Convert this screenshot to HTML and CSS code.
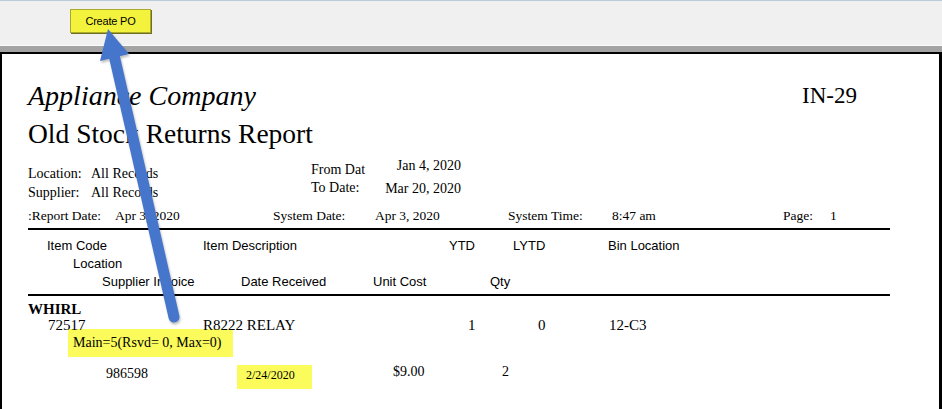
FILE: index.html
```html
<!DOCTYPE html>
<html>
<head>
<meta charset="utf-8">
<link rel="stylesheet" href="styles.css">
</head>
<body>
<div class="toolbar"><button class="btn">Create PO</button></div>
<div class="band"></div>
<div class="page">
  <div class="title-row">
    <div class="company">Appliance Company</div>
    <div class="code">IN-29</div>
  </div>
  <div class="report-title">Old Stock Returns Report</div>
  <div class="info">
    <div class="info-left">
      <div class="kv"><span class="k">Location:</span><span>All Records</span></div>
      <div class="kv"><span class="k">Supplier:</span><span>All Records</span></div>
    </div>
    <div class="info-labels"><div>From Dat</div><div>To Date:</div></div>
    <div class="info-values"><div>Jan 4, 2020</div><div>Mar 20, 2020</div></div>
  </div>
  <div class="meta">
    <span>:Report Date:</span><span>Apr 3, 2020</span>
    <span>System Date:</span><span>Apr 3, 2020</span>
    <span>System Time:</span><span>8:47 am</span>
    <span>Page:</span><span>1</span>
  </div>
  <div class="rule rule-a"></div>
  <div class="hdr hdr1">
    <span>Item Code</span><span>Item Description</span><span>YTD</span><span>LYTD</span><span>Bin Location</span>
  </div>
  <div class="hdr hdr2"><span>Location</span></div>
  <div class="hdr hdr3">
    <span>Supplier Invoice</span><span>Date Received</span><span>Unit Cost</span><span>Qty</span>
  </div>
  <div class="rule rule-b"></div>
  <div class="group">WHIRL</div>
  <div class="item-row">
    <span>72517</span><span>R8222 RELAY</span><span>1</span><span>0</span><span>12-C3</span>
  </div>
  <div class="note">Main=5(Rsvd= 0, Max=0)</div>
  <div class="detail-row">
    <span>986598</span><span><span class="mark">2/24/2020</span></span><span class="cost">$9.00</span><span class="qty">2</span>
  </div>
</div>
<svg class="arrow" viewBox="0 0 942 409" width="942" height="409">
  <line x1="114" y1="55" x2="174" y2="317" stroke="#4676cc" stroke-width="11" stroke-linecap="round"/>
  <polygon points="108,29 129,54 100,61" fill="#4676cc"/>
</svg>
</body>
</html>
```
FILE: styles.css
```css
html, body {
  margin: 0;
  padding: 0;
}
body {
  width: 942px;
  height: 409px;
  overflow: hidden;
  position: relative;
  background: #f0f0f0;
  font-family: "Liberation Serif", "Times New Roman", serif;
  color: #000;
}
.toolbar {
  box-sizing: border-box;
  height: 46px;
  border-top: 1px solid #bccbdb;
  border-bottom: 1px solid #fbfbfb;
  background: #f0f0f0;
  padding: 8px 0 0 70px;
}
.btn {
  display: block;
  box-sizing: border-box;
  width: 81px;
  height: 24px;
  padding: 0;
  margin: 0;
  background: #f3f33e;
  border: 1px solid #a9a92c;
  box-shadow: 1px 1px 0 #6f6f1c;
  font-family: "Liberation Sans", Arial, sans-serif;
  font-size: 11px;
  letter-spacing: -0.2px;
  color: #000;
}
.band {
  height: 6px;
  background: #a3a3a3;
}
.page {
  box-sizing: border-box;
  height: 357px;
  background: #fff;
  border-style: solid;
  border-color: #000;
  border-width: 2px 3px 0 2px;
  padding: 28px 0 0 26px;
}
.title-row {
  display: flex;
  height: 34px;
}
.company {
  font-style: italic;
  font-size: 28px;
  line-height: 28px;
  width: 774px;
}
.code {
  font-size: 23px;
  line-height: 30px;
  margin-top: -1px;
}
.report-title {
  font-size: 27.5px;
  line-height: 36px;
}
.info {
  display: grid;
  grid-template-columns: 283px 72px 78px;
  margin-top: 4px;
  font-size: 14px;
}
.info-left {
  padding-top: 8px;
  line-height: 19px;
}
.kv {
  display: flex;
}
.k {
  width: 63px;
}
.info-labels {
  padding-top: 5px;
  line-height: 18px;
}
.info-values {
  line-height: 19px;
  display: flex;
  flex-direction: column;
  gap: 4px;
  text-align: right;
}
.meta {
  display: grid;
  grid-template-columns: 87px 158px 102px 133px 104px 171px 47px auto;
  margin-top: 6px;
  font-size: 13.5px;
  line-height: 16px;
  width: 862px;
}
.rule {
  width: 862px;
  height: 2px;
  background: #000;
}
.rule-a {
  margin-top: 4px;
}
.hdr {
  font-family: "Liberation Sans", Arial, sans-serif;
  font-size: 13px;
  line-height: 18px;
  display: grid;
}
.hdr1 {
  margin-top: 7px;
  padding-left: 19px;
  grid-template-columns: 156px 246px 64px 95px auto;
}
.hdr2 {
  padding-left: 45px;
}
.hdr3 {
  padding-left: 74px;
  grid-template-columns: 139px 132px 117px auto;
}
.rule-b {
  margin-top: 3px;
}
.group {
  margin-top: 5px;
  font-weight: bold;
  font-size: 15px;
  line-height: 16px;
}
.item-row {
  display: grid;
  padding-left: 20px;
  grid-template-columns: 155px 265px 70px 71px auto;
  font-size: 15px;
  line-height: 16px;
}
.note {
  box-sizing: border-box;
  margin: -4px 0 0 40px;
  width: 165px;
  height: 28px;
  padding-left: 5px;
  background: #fbfb5c;
  font-size: 14px;
  line-height: 28px;
  white-space: nowrap;
}
.detail-row {
  display: grid;
  margin-top: 8px;
  padding-left: 78px;
  grid-template-columns: 131px 156px 109px auto;
  font-size: 14px;
  line-height: 17px;
  align-items: start;
}
.mark {
  display: block;
  box-sizing: border-box;
  width: 75px;
  height: 24px;
  padding: 0 0 3px 9px;
  background: #fbfb5c;
  font-size: 12px;
  line-height: 21px;
}
.cost, .qty {
  margin-top: -2px;
}
.arrow {
  position: absolute;
  left: 0;
  top: 0;
  pointer-events: none;
  filter: drop-shadow(1px 2px 1px rgba(0, 0, 0, 0.25));
}
```
